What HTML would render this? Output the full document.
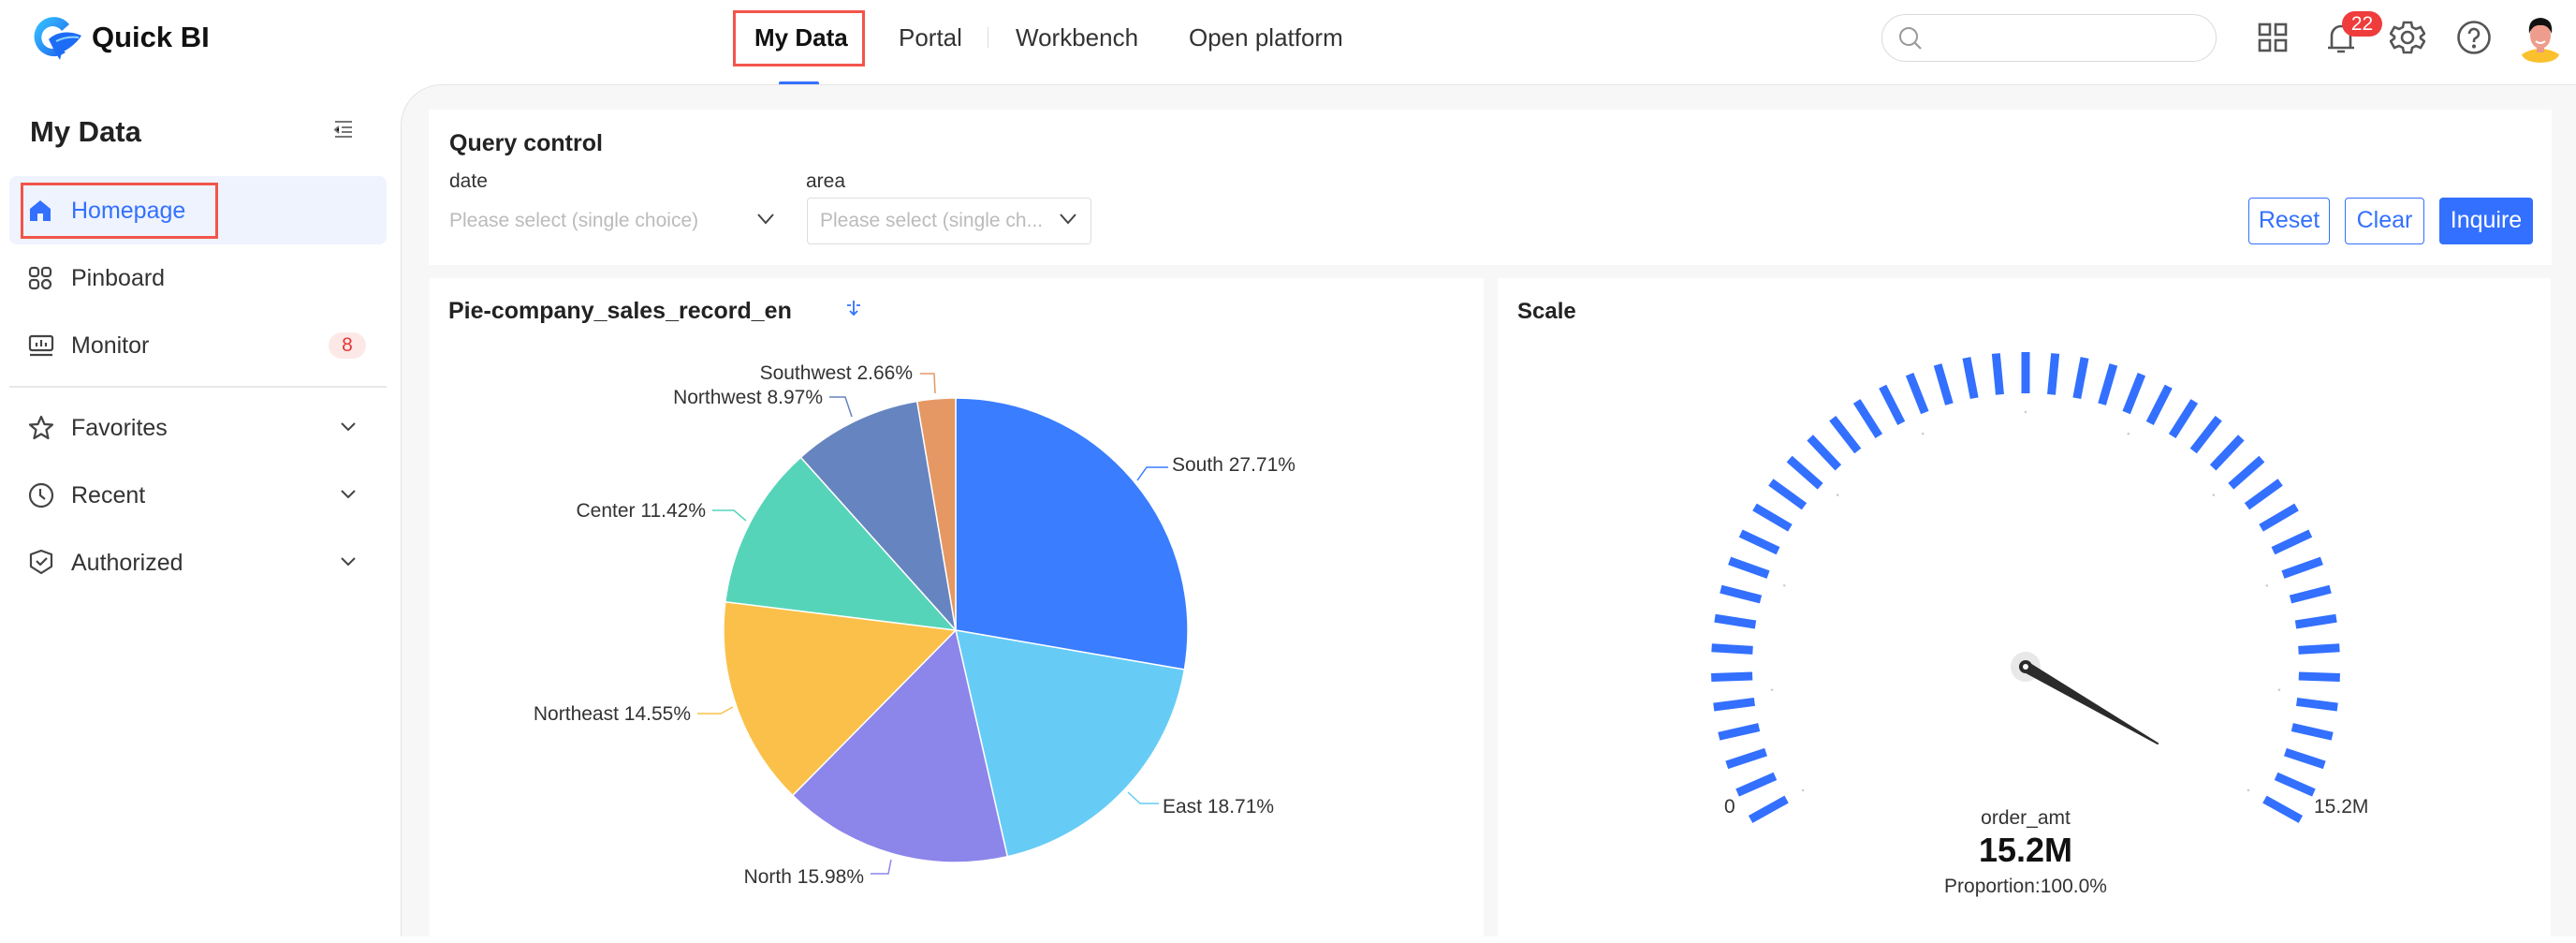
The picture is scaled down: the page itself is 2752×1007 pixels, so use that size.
<!DOCTYPE html>
<html><head><meta charset="utf-8"><style>
*{box-sizing:border-box;margin:0;padding:0}
body{width:2752px;height:996px;overflow:hidden;background:#fff;font-family:"Liberation Sans",Arial,sans-serif;color:#333;position:relative}
.abs{position:absolute}
.nav{position:absolute;top:24px;font-size:26px;color:#333;line-height:32px}
.side{position:absolute;left:76px;font-size:25px;color:#333;line-height:30px}
.ico{position:absolute;left:30px}
.chev{position:absolute;left:362px}
.btn{position:absolute;top:211px;height:50px;border:1.5px solid #3370ff;border-radius:4px;color:#3370ff;font-size:25px;line-height:47px;text-align:center}
.lbl{font-size:21px;fill:#333;font-family:"Liberation Sans",Arial,sans-serif}
</style></head><body>
<svg class="abs" style="left:30px;top:16px" width="62" height="50" viewBox="0 0 62 50">
<defs><linearGradient id="lg" x1="0" y1="0" x2="1" y2="1"><stop offset="0" stop-color="#38c8ff"/><stop offset="1" stop-color="#1d5ff0"/></linearGradient></defs>
<path d="M44 10 A21 21 0 1 0 40 40 L33 34 A12 12 0 1 1 36 17 Z" fill="url(#lg)"/>
<path d="M22 26 C30 18 44 16 57 22 C52 30 44 36 36 40 L34 48 L28 38 Z" fill="#1d6cf5"/>
<path d="M30 28 C38 24 46 23 54 24" stroke="#8fd6ff" stroke-width="2" fill="none"/>
</svg>
<div class="abs" style="left:98px;top:23px;font-size:31px;font-weight:bold;color:#111;line-height:34px">Quick BI</div>
<div class="abs" style="left:783px;top:11px;width:141px;height:60px;border:3px solid #f2554a"></div>
<div class="nav" style="left:806px;font-weight:bold;color:#111">My Data</div>
<div class="abs" style="left:832px;top:87px;width:43px;height:4px;background:#3370ff;border-radius:2px"></div>
<div class="nav" style="left:960px">Portal</div>
<div class="abs" style="left:1055px;top:29px;width:1px;height:22px;background:#ddd"></div>
<div class="nav" style="left:1085px">Workbench</div>
<div class="nav" style="left:1270px">Open platform</div>
<div class="abs" style="left:2010px;top:15px;width:358px;height:51px;border:1.5px solid #d9d9d9;border-radius:26px"></div>
<svg class="abs" style="left:2026px;top:26px" width="30" height="30" viewBox="0 0 30 30"><circle cx="13" cy="13" r="9" stroke="#999" stroke-width="2" fill="none"/><path d="M20 20 L26 26" stroke="#999" stroke-width="2.2"/></svg>
<svg class="abs" style="left:2412px;top:24px" width="32" height="32" viewBox="0 0 32 32" fill="none" stroke="#555" stroke-width="2.6"><rect x="2" y="2" width="11" height="11"/><rect x="19" y="2" width="11" height="11"/><rect x="2" y="19" width="11" height="11"/><rect x="19" y="19" width="11" height="11"/></svg>
<svg class="abs" style="left:2485px;top:22px" width="32" height="38" viewBox="0 0 32 38" fill="none" stroke="#555" stroke-width="2.6"><path d="M6 29 V16 A10 10 0 0 1 26 16 V29 M2 29 H30 M12 33 H20"/></svg>
<div class="abs" style="left:2502px;top:12px;width:43px;height:27px;background:#ef3c3c;border-radius:14px;color:#fff;font-size:21px;text-align:center;line-height:27px">22</div>
<svg class="abs" style="left:2553px;top:21px" width="38" height="38" viewBox="0 0 38 38" fill="none" stroke="#555" stroke-width="2.6"><path d="M15 3 H23 L24 8 L28 10 L33 8 L37 15 L33 18 V20 L37 23 L33 30 L28 28 L24 30 L23 35 H15 L14 30 L10 28 L5 30 L1 23 L5 20 V18 L1 15 L5 8 L10 10 L14 8 Z"/><circle cx="19" cy="19" r="6"/></svg>
<svg class="abs" style="left:2624px;top:21px" width="38" height="38" viewBox="0 0 38 38" fill="none" stroke="#555" stroke-width="2.6"><circle cx="19" cy="19" r="16.5"/><path d="M14 15 A5 5 0 1 1 21 19.5 C19 20.5 19 21.5 19 24"/><circle cx="19" cy="28.5" r="0.8" fill="#555"/></svg>
<svg class="abs" style="left:2692px;top:16px" width="44" height="52" viewBox="0 0 44 52"><path d="M2 42 Q22 30 42 42 Q40 50 22 51 Q4 50 2 42Z" fill="#fbc02d"/><rect x="18" y="32" width="8" height="8" fill="#e99a8a"/><ellipse cx="22" cy="22" rx="11" ry="14" fill="#ee9c8c"/><path d="M10 20 Q8 4 22 3 Q36 4 34 20 Q30 10 22 11 Q14 10 10 20Z" fill="#111"/><path d="M17 28 Q22 32 27 28" stroke="#fff" stroke-width="2" fill="none"/></svg>
<div class="abs" style="left:428px;top:90px;width:2330px;height:910px;background:#f7f7f7;border-top:1.5px solid #e3e3e3;border-left:1.5px solid #e3e3e3;border-top-left-radius:44px"></div>
<div class="abs" style="left:32px;top:123px;font-size:31px;font-weight:bold;color:#222;line-height:36px">My Data</div>
<svg class="abs" style="left:356px;top:128px" width="22" height="20" viewBox="0 0 22 20" stroke="#777" stroke-width="2"><path d="M2 2H20M9 8H20M9 13H20M2 18H20M6 7L2 10.5L6 14"/></svg>
<div class="abs" style="left:10px;top:188px;width:403px;height:73px;background:#eef3fe;border-radius:8px"></div>
<div class="abs" style="left:22px;top:195px;width:211px;height:60px;border:3px solid #f2554a"></div>
<svg class="ico" style="top:212px" width="26" height="26" viewBox="0 0 26 26"><path d="M13 2 L24 11 V24 H16 V16 H10 V24 H2 V11 Z" fill="#3370ff"/></svg>
<div class="side" style="top:210px;color:#3370ff">Homepage</div>
<svg class="ico" style="top:284px" width="26" height="26" viewBox="0 0 26 26" fill="none" stroke="#444" stroke-width="2.2"><rect x="2" y="2" width="9" height="9" rx="3"/><rect x="15" y="2" width="9" height="9" rx="3"/><rect x="2" y="15" width="9" height="9" rx="3"/><rect x="15" y="15" width="9" height="9" rx="4.5"/></svg>
<div class="side" style="top:282px">Pinboard</div>
<svg class="ico" style="top:357px" width="28" height="24" viewBox="0 0 28 24" fill="none" stroke="#444" stroke-width="2.2"><rect x="2" y="2" width="24" height="15" rx="2"/><path d="M2 22H26M9 13V9M14 13V6M19 13V9"/></svg>
<div class="side" style="top:354px">Monitor</div>
<div class="abs" style="left:351px;top:355px;width:40px;height:28px;background:#fde8e8;border-radius:14px;color:#e53935;font-size:21px;text-align:center;line-height:28px">8</div>
<div class="abs" style="left:10px;top:412px;width:403px;height:1.5px;background:#e8e8e8"></div>
<svg class="ico" style="top:443px" width="28" height="28" viewBox="0 0 28 28" fill="none" stroke="#444" stroke-width="2.2" stroke-linejoin="round"><path d="M14 2 L17.5 10 L26 10.5 L19.5 16 L21.5 25 L14 20.5 L6.5 25 L8.5 16 L2 10.5 L10.5 10 Z"/></svg>
<div class="side" style="top:442px">Favorites</div>
<svg class="ico" style="top:515px" width="28" height="28" viewBox="0 0 28 28" fill="none" stroke="#444" stroke-width="2.2"><circle cx="14" cy="14" r="12"/><path d="M13 7V14L18 18"/></svg>
<div class="side" style="top:514px">Recent</div>
<svg class="ico" style="top:586px" width="28" height="28" viewBox="0 0 28 28" fill="none" stroke="#444" stroke-width="2.2" stroke-linejoin="round"><path d="M14 2 L25 6 V19 L14 26 L3 19 V6 Z M9 13 L13 17 L20 10"/></svg>
<div class="side" style="top:586px">Authorized</div>
<svg class="chev" style="top:449px" width="20" height="14" viewBox="0 0 20 14" fill="none" stroke="#444" stroke-width="2"><path d="M3 3L10 10L17 3"/></svg>
<svg class="chev" style="top:521px" width="20" height="14" viewBox="0 0 20 14" fill="none" stroke="#444" stroke-width="2"><path d="M3 3L10 10L17 3"/></svg>
<svg class="chev" style="top:593px" width="20" height="14" viewBox="0 0 20 14" fill="none" stroke="#444" stroke-width="2"><path d="M3 3L10 10L17 3"/></svg>
<div class="abs" style="left:458px;top:117px;width:2268px;height:166px;background:#fff"></div>
<div class="abs" style="left:480px;top:139px;font-size:25px;font-weight:bold;color:#222">Query control</div>
<div class="abs" style="left:480px;top:182px;font-size:21px;color:#333">date</div>
<div class="abs" style="left:861px;top:182px;font-size:21px;color:#333">area</div>
<div class="abs" style="left:480px;top:224px;font-size:21px;color:#bbb">Please select (single choice)</div>
<svg class="abs" style="left:807px;top:226px" width="22" height="16" viewBox="0 0 22 16" fill="none" stroke="#444" stroke-width="2"><path d="M3 3L11 12L19 3"/></svg>
<div class="abs" style="left:862px;top:211px;width:304px;height:50px;border:1.5px solid #ddd;border-radius:4px"></div>
<div class="abs" style="left:876px;top:224px;font-size:21px;color:#bbb">Please select (single ch...</div>
<svg class="abs" style="left:1130px;top:226px" width="22" height="16" viewBox="0 0 22 16" fill="none" stroke="#444" stroke-width="2"><path d="M3 3L11 12L19 3"/></svg>
<div class="btn" style="left:2402px;width:87px">Reset</div>
<div class="btn" style="left:2505px;width:85px">Clear</div>
<div class="btn" style="left:2606px;width:100px;background:#3370ff;color:#fff">Inquire</div>
<div class="abs" style="left:459px;top:297px;width:1126px;height:710px;background:#fff"></div>
<div class="abs" style="left:479px;top:318px;font-size:25px;font-weight:bold;color:#222">Pie-company_sales_record_en</div>
<svg class="abs" style="left:903px;top:320px" width="18" height="20" viewBox="0 0 18 20" fill="none" stroke="#3370ff" stroke-width="1.8"><path d="M9 1V16M5 12L9 16L13 12M2 6H6M12 6H16"/></svg>
<svg id="pie" class="abs" style="left:459px;top:297px" width="1126" height="699"></svg>
<div class="abs" style="left:1600px;top:297px;width:1125px;height:710px;background:#fff"></div>
<div class="abs" style="left:1621px;top:319px;font-size:24px;font-weight:bold;color:#222">Scale</div>
<svg id="gauge" class="abs" style="left:1600px;top:297px" width="1125" height="699"></svg>
<script>
(function(){
var ns="http://www.w3.org/2000/svg";
function el(p,t,a,txt){var e=document.createElementNS(ns,t);for(var k in a)e.setAttribute(k,a[k]);if(txt)e.textContent=txt;p.appendChild(e);return e;}
var pie=document.getElementById('pie');
var cx=1021-459,cy=673-297,r=248;
var d=[[27.71,'#3a7dff'],[18.71,'#66ccf5'],[15.98,'#8c85ea'],[14.55,'#fbc04a'],[11.42,'#56d4b9'],[8.97,'#6684c0'],[2.66,'#e59863']];
var c=0;
d.forEach(function(s){var a0=c/100*2*Math.PI,a1=(c+s[0])/100*2*Math.PI;c+=s[0];
var x0=cx+r*Math.sin(a0),y0=cy-r*Math.cos(a0),x1=cx+r*Math.sin(a1),y1=cy-r*Math.cos(a1);
el(pie,'path',{d:'M'+cx+' '+cy+'L'+x0+' '+y0+'A'+r+' '+r+' 0 '+((a1-a0)>Math.PI?1:0)+' 1 '+x1+' '+y1+'Z',fill:s[1],stroke:'#fff','stroke-width':1.5});});
var L=[['South 27.71%',1252,496,'start','#3a7dff','M1215 513 L1225 499 L1248 499'],
['East 18.71%',1242,861,'start','#66ccf5','M1205 846 L1218 858 L1238 858'],
['North 15.98%',923,936,'end','#8c85ea','M952 918 L949 933 L930 933'],
['Northeast 14.55%',738,762,'end','#fbc04a','M783 755 L770 762 L745 762'],
['Center 11.42%',754,545,'end','#56d4b9','M797 556 L784 545 L761 545'],
['Northwest 8.97%',879,424,'end','#6684c0','M910 445 L903 424 L886 424'],
['Southwest 2.66%',975,398,'end','#e59863','M999 420 L998 399 L983 399']];
L.forEach(function(l){el(pie,'path',{d:l[5].replace(/(\d+) (\d+)/g,function(m,a,b){return (a-459)+' '+(b-297)}),stroke:l[4],fill:'none','stroke-width':1.5});
el(pie,'text',{x:l[1]-459,y:l[2]-297+7,'text-anchor':l[3],'class':'lbl'},l[0]);});
var g=document.getElementById('gauge');
var gx=2164-1600,gy=712-297;
var n=45,A=119;
for(var i=0;i<n;i++){var a=(-A+2*A*i/(n-1))*Math.PI/180;var s=Math.sin(a),co=Math.cos(a);
el(g,'line',{x1:gx+292*s,y1:gy-292*co,x2:gx+336*s,y2:gy-336*co,stroke:'#3370ff','stroke-width':9});}
for(var i=0;i<=10;i++){var a=(-A+2*A*i/10)*Math.PI/180;el(g,'circle',{cx:gx+272*Math.sin(a),cy:gy-272*Math.cos(a),r:1.3,fill:'#ccc'});}
var nx=2305-1600,ny=794-297,ang=Math.atan2(ny-gy,nx-gx),px=-Math.sin(ang),py=Math.cos(ang);
el(g,'circle',{cx:gx,cy:gy,r:16,fill:'#e8e8e8'});
el(g,'path',{d:'M'+(gx+5*px)+' '+(gy+5*py)+'L'+nx+' '+ny+'L'+(gx-5*px)+' '+(gy-5*py)+'Z',fill:'#2b2b2b',stroke:'#2b2b2b','stroke-width':2,'stroke-linejoin':'round'});
el(g,'circle',{cx:gx,cy:gy,r:7,fill:'#2b2b2b'});
el(g,'circle',{cx:gx,cy:gy,r:3,fill:'#fff'});
el(g,'text',{x:1842-1600,y:868-297,'class':'lbl',fill:'#555'},'0');
el(g,'text',{x:2472-1600,y:868-297,'class':'lbl'},'15.2M');
el(g,'text',{x:gx,y:880-297,'class':'lbl','text-anchor':'middle'},'order_amt');
el(g,'text',{x:gx,y:920-297,'text-anchor':'middle','font-size':36,'font-weight':'bold','fill':'#111','font-family':'Liberation Sans, Arial, sans-serif'},'15.2M');
el(g,'text',{x:gx,y:953-297,'class':'lbl','text-anchor':'middle'},'Proportion:100.0%');
})();
</script>
</body></html>
